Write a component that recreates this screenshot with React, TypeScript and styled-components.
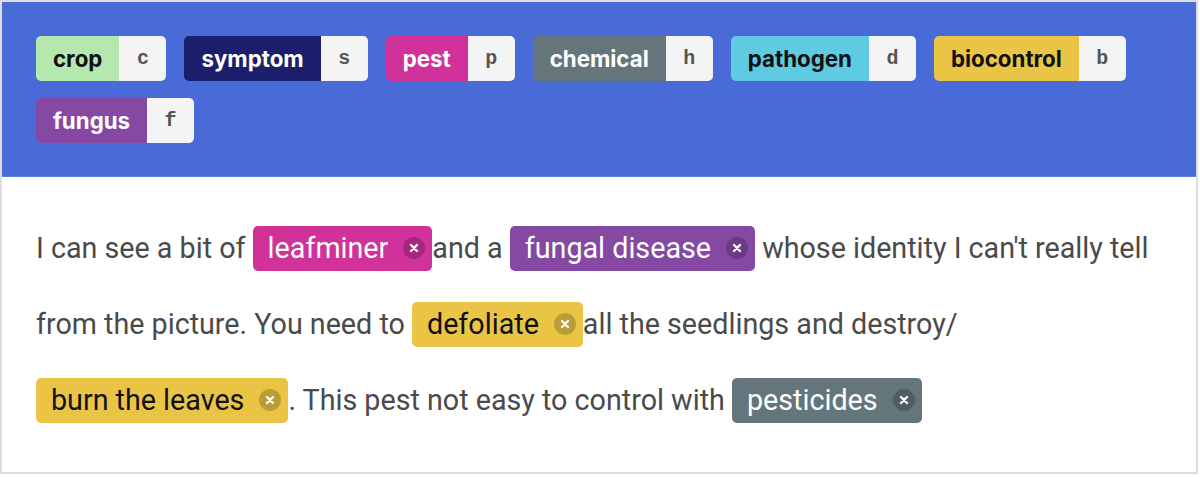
import React from "react";
import styled, { createGlobalStyle } from "styled-components";

const Global = createGlobalStyle`
  html, body { margin: 0; padding: 0; background: #ffffff; }
  * { box-sizing: border-box; }
`;

type Tone = { bg: string; fg: string };

const TONES: Record<string, Tone> = {
  crop: { bg: "#b4e8ae", fg: "#111111" },
  symptom: { bg: "#1b1f6b", fg: "#ffffff" },
  pest: { bg: "#d0329a", fg: "#ffffff" },
  chemical: { bg: "#65757c", fg: "#ffffff" },
  pathogen: { bg: "#5ecbe3", fg: "#111111" },
  biocontrol: { bg: "#eac545", fg: "#111111" },
  fungus: { bg: "#8549a4", fg: "#ffffff" },
};

const Card = styled.div`
  width: 1198px;
  height: 474px;
  border: 2px solid #dedede;
  background: #ffffff;
  display: flex;
  flex-direction: column;
`;

const Toolbar = styled.div`
  background: #486bd8;
  border-bottom: 1px solid #5a7de2;
  padding: 34px 34px 33px;
  display: flex;
  flex-wrap: wrap;
  column-gap: 18px;
  row-gap: 17px;
`;

const LabelButton = styled.button`
  display: inline-flex;
  height: 45px;
  padding: 0;
  border: none;
  border-radius: 5px;
  overflow: hidden;
  background: none;
  cursor: pointer;
`;

const LabelName = styled.span<{ $bg: string; $fg: string }>`
  display: flex;
  align-items: center;
  padding: 0 17px;
  background: ${(p) => p.$bg};
  color: ${(p) => p.$fg};
  font-family: Inter, "Noto Sans", sans-serif;
  font-weight: 700;
  font-size: 22.3px;
`;

const LabelKey = styled.span`
  display: flex;
  align-items: center;
  justify-content: center;
  width: 47px;
  background: #f4f4f5;
  color: #555555;
  font-family: "Courier New", "Nimbus Mono PS", "Liberation Mono", monospace;
  font-weight: 700;
  font-size: 20px;
`;

const Body = styled.div`
  padding: 33px 34px;
  font-family: Roboto, "Noto Sans", sans-serif;
  font-weight: 400;
  font-size: 28.7px;
  line-height: 76px;
  color: #4a4a4a;
`;

const Mark = styled.mark<{ $bg: string; $fg: string }>`
  display: inline-flex;
  align-items: center;
  gap: 15px;
  height: 45px;
  padding: 0 7px 0 15px;
  border-radius: 5px;
  background: ${(p) => p.$bg};
  color: ${(p) => p.$fg};
  line-height: 45px;
  vertical-align: middle;
  position: relative;
  top: -2px;
`;

const Close = styled.span`
  display: inline-flex;
  align-items: center;
  justify-content: center;
  width: 22px;
  height: 22px;
  border-radius: 50%;
  background: rgba(0, 0, 0, 0.2);
  color: #ffffff;
`;

const labels: { name: string; key: string }[] = [
  { name: "crop", key: "c" },
  { name: "symptom", key: "s" },
  { name: "pest", key: "p" },
  { name: "chemical", key: "h" },
  { name: "pathogen", key: "d" },
  { name: "biocontrol", key: "b" },
  { name: "fungus", key: "f" },
];

const X = () => (
  <svg width="10" height="10" viewBox="0 0 10 10">
    <path d="M2 2 L8 8 M8 2 L2 8" stroke="#fff" strokeWidth="2.4" strokeLinecap="round" />
  </svg>
);

const Tag: React.FC<{ tone: string; children: React.ReactNode }> = ({ tone, children }) => (
  <Mark $bg={TONES[tone].bg} $fg={TONES[tone].fg}>
    {children}
    <Close>
      <X />
    </Close>
  </Mark>
);

export default function App() {
  return (
    <>
      <Global />
      <Card>
        <Toolbar>
          {labels.map((l) => (
            <LabelButton key={l.name}>
              <LabelName $bg={TONES[l.name].bg} $fg={TONES[l.name].fg}>
                {l.name}
              </LabelName>
              <LabelKey>{l.key}</LabelKey>
            </LabelButton>
          ))}
        </Toolbar>
        <Body>
          I can see a bit of <Tag tone="pest">leafminer</Tag>and a{" "}
          <Tag tone="fungus">fungal disease</Tag> whose identity I can't really tell from the
          picture. You need to <Tag tone="biocontrol">defoliate</Tag>all the seedlings and
          destroy/ <Tag tone="biocontrol">burn the leaves</Tag>. This pest not easy to control
          with <Tag tone="chemical">pesticides</Tag>
        </Body>
      </Card>
    </>
  );
}
